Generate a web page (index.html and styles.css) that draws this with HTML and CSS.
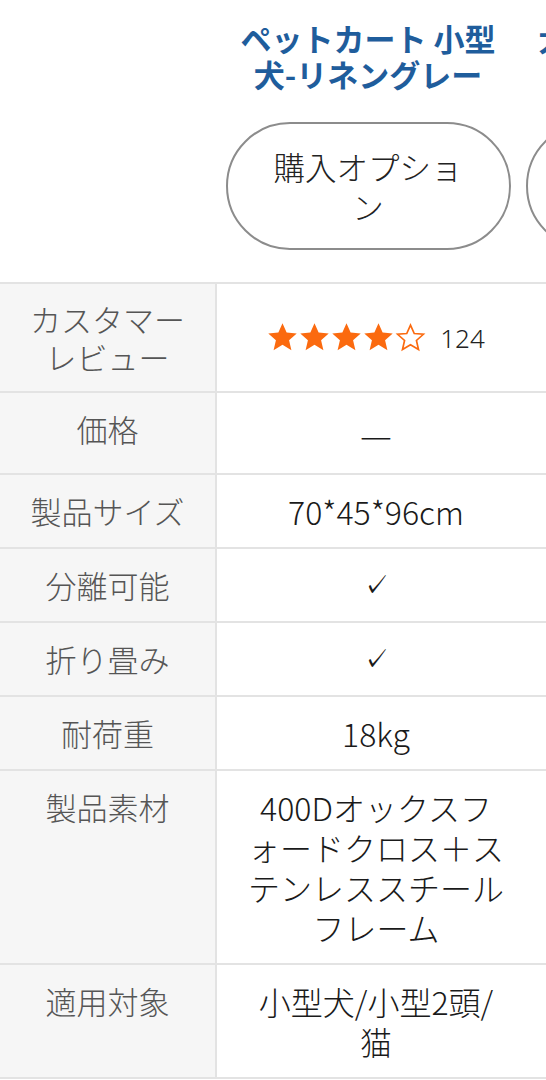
FILE: index.html
```html
<!DOCTYPE html>
<html lang="ja">
<head>
<meta charset="utf-8">
<title>比較表</title>
<link rel="stylesheet" href="styles.css">
</head>
<body>
<div class="page">
  <div class="head">
    <div class="head-spacer"></div>
    <div class="prod">
      <h2 class="prod-title">ペットカート 小型犬-リネングレー</h2>
      <button class="buy-btn">購入オプション</button>
    </div>
    <div class="prod">
      <h2 class="prod-title">大型犬-ペットカート ブラック</h2>
      <button class="buy-btn">購入オプション</button>
    </div>
  </div>
  <table class="spec">
    <colgroup>
      <col class="c-label">
      <col class="c-val">
      <col class="c-val2">
    </colgroup>
    <tbody>
      <tr class="row-review">
        <th class="label">カスタマー<br>レビュー</th>
        <td class="val">
          <div class="rating">
            <span class="stars">
              <svg class="star" viewBox="0 0 24 24"><path class="fill" d="M12 1l3.2 7.2 7.8.7-5.9 5.2 1.8 7.7L12 17.7l-6.9 4.1 1.8-7.7L1 8.9l7.8-.7z"/></svg>
              <svg class="star" viewBox="0 0 24 24"><path class="fill" d="M12 1l3.2 7.2 7.8.7-5.9 5.2 1.8 7.7L12 17.7l-6.9 4.1 1.8-7.7L1 8.9l7.8-.7z"/></svg>
              <svg class="star" viewBox="0 0 24 24"><path class="fill" d="M12 1l3.2 7.2 7.8.7-5.9 5.2 1.8 7.7L12 17.7l-6.9 4.1 1.8-7.7L1 8.9l7.8-.7z"/></svg>
              <svg class="star" viewBox="0 0 24 24"><path class="fill" d="M12 1l3.2 7.2 7.8.7-5.9 5.2 1.8 7.7L12 17.7l-6.9 4.1 1.8-7.7L1 8.9l7.8-.7z"/></svg>
              <svg class="star" viewBox="0 0 24 24"><path class="empty" d="M12 2.4l2.9 6.5 7.1.6-5.4 4.8 1.6 7L12 17.6l-6.2 3.7 1.6-7-5.4-4.8 7.1-.6z"/></svg>
            </span>
            <span class="count">124</span>
          </div>
        </td>
        <td class="val">
          <div class="rating">
            <span class="count">58</span>
          </div>
        </td>
      </tr>
      <tr class="row-price">
        <th class="label">価格</th>
        <td class="val"><span class="dash">—</span></td>
        <td class="val"><span class="dash">—</span></td>
      </tr>
      <tr>
        <th class="label">製品サイズ</th>
        <td class="val">70*45*96cm</td>
        <td class="val">80*55*100cm</td>
      </tr>
      <tr>
        <th class="label">分離可能</th>
        <td class="val"><span class="check">✓</span></td>
        <td class="val"><span class="check">✓</span></td>
      </tr>
      <tr>
        <th class="label">折り畳み</th>
        <td class="val"><span class="check">✓</span></td>
        <td class="val"><span class="check">✓</span></td>
      </tr>
      <tr>
        <th class="label">耐荷重</th>
        <td class="val">18kg</td>
        <td class="val">30kg</td>
      </tr>
      <tr>
        <th class="label">製品素材</th>
        <td class="val">400Dオックスフ<br>ォードクロス＋ス<br>テンレススチール<br>フレーム</td>
        <td class="val">600Dオックスフ<br>ォードクロス</td>
      </tr>
      <tr class="row-last">
        <th class="label">適用対象</th>
        <td class="val">小型犬/小型2頭/<br>猫</td>
        <td class="val">中型犬/大型犬</td>
      </tr>
    </tbody>
  </table>
</div>
</body>
</html>
```

FILE: styles.css
```css
* {
  box-sizing: border-box;
}

html, body {
  margin: 0;
  padding: 0;
  background: #ffffff;
}

body {
  font-family: "Noto Sans CJK JP", "Noto Sans", sans-serif;
  color: #1a1a1a;
  overflow-x: hidden;
}

.page {
  width: 546px;
  overflow: hidden;
}

/* ---------- product header ---------- */
.head {
  display: flex;
  height: 282px;
}

.head-spacer {
  flex: 0 0 218px;
}

.prod {
  flex: 0 0 300px;
  display: flex;
  flex-direction: column;
  align-items: center;
  padding-top: 20px;
}

.prod-title {
  margin: 0;
  padding: 0 14px;
  font-size: 31px;
  line-height: 36px;
  font-weight: 700;
  color: #1f5d9c;
  text-align: center;
}

.buy-btn {
  margin-top: 30px;
  width: 285px;
  height: 128px;
  padding: 0 42px;
  border: 2px solid #8c8c8c;
  border-radius: 64px;
  background: #ffffff;
  font-family: inherit;
  font-size: 31.5px;
  font-weight: 300;
  line-height: 40px;
  color: #222222;
}

/* ---------- spec table ---------- */
.spec {
  border-collapse: separate;
  border-spacing: 0;
  table-layout: fixed;
  width: 835px;
}

.c-label {
  width: 217px;
}

.c-val {
  width: 318px;
}

.c-val2 {
  width: 300px;
}

.spec th,
.spec td {
  border-top: 2px solid #e3e3e3;
  padding: 16px;
  line-height: 40px;
  text-align: center;
  vertical-align: middle;
}

.row-last th,
.row-last td {
  border-bottom: 2px solid #e3e3e3;
}

.label {
  background: #f6f6f6;
  border-right: 2px solid #e3e3e3;
  color: #555555;
  font-size: 31px;
  font-weight: 300;
  padding-left: 10px;
  padding-right: 10px;
}

.spec th.label {
  vertical-align: top;
}

.val {
  font-size: 32px;
  font-weight: 300;
  color: #1a1a1a;
}

.spec .row-review th.label {
  vertical-align: middle;
  line-height: 37.5px;
}

.dash {
  display: inline-block;
  line-height: 48px;
  font-size: 36px;
  vertical-align: top;
}

.check {
  display: inline-block;
  font-family: "DejaVu Sans", sans-serif;
  font-size: 26px;
  line-height: 40px;
  vertical-align: top;
}

/* rating */
.rating {
  display: flex;
  align-items: center;
  justify-content: center;
  gap: 14px;
}

.stars {
  display: flex;
  gap: 1px;
}

.star {
  width: 31px;
  height: 31px;
  display: block;
}

.star .fill {
  fill: #fb6a0f;
}

.star .empty {
  fill: none;
  stroke: #fb6a0f;
  stroke-width: 1.3;
  stroke-linejoin: miter;
}

.count {
  font-family: "Noto Sans", sans-serif;
  font-size: 26px;
  line-height: 40px;
  color: #222222;
}
```
